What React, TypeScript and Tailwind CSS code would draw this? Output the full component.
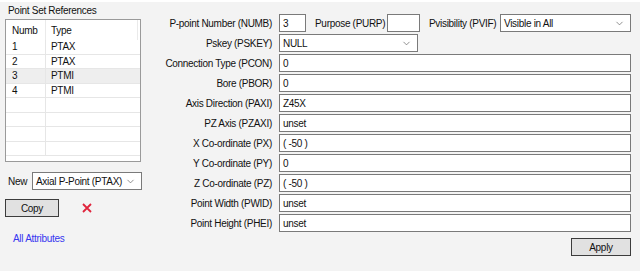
import { ChevronDown } from "lucide-react";

const font = { fontFamily: '"Liberation Sans", Arial, sans-serif' };

const rows = [
  { numb: "1", type: "PTAX" },
  { numb: "2", type: "PTAX" },
  { numb: "3", type: "PTMI", selected: true },
  { numb: "4", type: "PTMI" },
  { numb: "", type: "" },
  { numb: "", type: "" },
  { numb: "", type: "" },
  { numb: "", type: "" },
];

const fields = [
  { label: "Connection Type (PCON)", value: "0" },
  { label: "Bore (PBOR)", value: "0" },
  { label: "Axis Direction (PAXI)", value: "Z45X" },
  { label: "PZ Axis (PZAXI)", value: "unset" },
  { label: "X Co-ordinate (PX)", value: "( -50 )" },
  { label: "Y Co-ordinate (PY)", value: "0" },
  { label: "Z Co-ordinate (PZ)", value: "( -50 )" },
  { label: "Point Width (PWID)", value: "unset" },
  { label: "Point Height (PHEI)", value: "unset" },
];

function Select({ value, className }: { value: string; className?: string }) {
  return (
    <div
      className={`flex h-[18px] items-center justify-between border border-[#7a7a7a] bg-white pl-[3px] pr-[5px] ${className ?? ""}`}
    >
      <span>{value}</span>
      <ChevronDown className="size-[11px] text-[#606060]" strokeWidth={1.5} />
    </div>
  );
}

function Field({ label, value }: { label: string; value: string }) {
  return (
    <div className="flex h-[18px] items-center">
      <div className="w-[129px] shrink-0 pr-[7px] text-right">{label}</div>
      <div className="flex h-full flex-1 items-center border border-[#7a7a7a] bg-white px-[3px]">
        {value}
      </div>
    </div>
  );
}

export default function App() {
  return (
    <div
      className="h-[271px] w-[640px] overflow-hidden bg-[#f3f3f3] text-[10px] tracking-[-0.3px] text-[#111]"
      style={font}
    >
      <div className="h-[2px] bg-white" />
      <div className="flex">
        {/* left panel */}
        <div className="flex w-[150px] shrink-0 flex-col pl-[5px]">
          <div className="flex h-[17px] items-end pb-[1px] pl-[3px]">Point Set References</div>
          <div className="h-[143px] w-[136px] overflow-hidden border border-[#9a9a9a] bg-white">
            <div className="flex h-[20px] items-center">
              <div className="flex h-full w-[40px] items-center border-r border-[#eaeaea] pl-[6px]">
                Numb
              </div>
              <div className="flex h-full flex-1 items-center border-r border-[#eaeaea] pl-[5px]">
                Type
              </div>
              <div className="w-[2px]" />
            </div>
            {rows.map((r, i) => (
              <div
                key={i}
                className={`flex h-[14.5px] items-center border-b border-[#e6e6e6] ${r.selected ? "bg-[#eeeeee]" : ""}`}
              >
                <div className="flex h-full w-[40px] items-center border-r border-[#e6e6e6] pl-[6px]">
                  {r.numb}
                </div>
                <div className="pl-[5px]">{r.type}</div>
              </div>
            ))}
          </div>
          <div className="mt-[10px] flex h-[18px] items-center">
            <span className="w-[27px] pl-[3px]">New</span>
            <Select value="Axial P-Point (PTAX)" className="w-[110px]" />
          </div>
          <div className="mt-[9px] flex items-center">
            <button className="h-[18px] w-[54px] border border-[#3c3c3c] bg-[#e1e1e1]">Copy</button>
            <svg className="ml-[23px] size-[10px]" viewBox="0 0 10 10">
              <path d="M1 1 L9 9 M9 1 L1 9" stroke="#e0243c" strokeWidth="1.8" />
            </svg>
          </div>
          <div className="mt-[14px] pl-[8px] text-[#3535f0]">All Attributes</div>
        </div>

        {/* right panel */}
        <div className="flex flex-1 flex-col gap-[2px] pr-[9px] pt-[12px]">
          <div className="flex h-[18px] items-center">
            <div className="w-[129px] shrink-0 pr-[7px] text-right">P-point Number (NUMB)</div>
            <div className="flex h-full w-[27px] items-center border border-[#7a7a7a] bg-white px-[3px]">3</div>
            <div className="ml-[9px] w-[72px]">Purpose (PURP)</div>
            <div className="h-full w-[33px] border border-[#7a7a7a] bg-white" />
            <div className="ml-[9px] w-[71px]">Pvisibility (PVIF)</div>
            <Select value="Visible in All" className="flex-1" />
          </div>
          <div className="flex h-[18px] items-center">
            <div className="w-[129px] shrink-0 pr-[7px] text-right">Pskey (PSKEY)</div>
            <Select value="NULL" className="w-[139px]" />
          </div>
          {fields.map((f) => (
            <Field key={f.label} label={f.label} value={f.value} />
          ))}
          <div className="mt-[4px] flex justify-end">
            <button className="h-[18px] w-[60px] border border-[#3c3c3c] bg-[#e1e1e1]">Apply</button>
          </div>
        </div>
      </div>
    </div>
  );
}
